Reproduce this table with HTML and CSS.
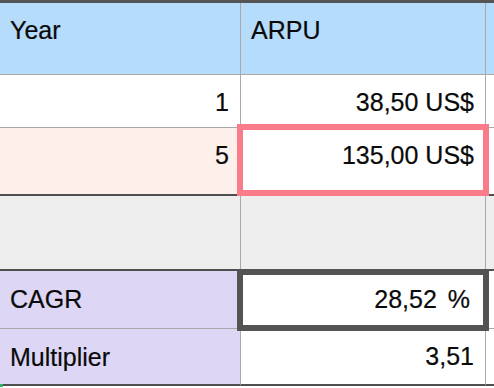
FILE: index.html
```html
<!DOCTYPE html>
<html>
<head>
<meta charset="utf-8">
<link rel="stylesheet" href="styles.css">
</head>
<body>
<div class="sheet">
  <div class="cell head c1">Year</div>
  <div class="cell head c2">ARPU</div>
  <div class="cell head c3"></div>

  <div class="cell r1 c1 num">1</div>
  <div class="cell r1 c2 num">38,50 US$</div>
  <div class="cell r1 c3"></div>

  <div class="cell r2 c1 num peach">5</div>
  <div class="cell r2 c2 num sel-pink">135,00 US$</div>
  <div class="cell r2 c3"></div>

  <div class="cell r3 c1 grey"></div>
  <div class="cell r3 c2 grey"></div>
  <div class="cell r3 c3 grey"></div>

  <div class="cell r4 c1 purple">CAGR</div>
  <div class="cell r4 c2 num sel-dark">28,52 %</div>
  <div class="cell r4 c3"></div>

  <div class="cell r5 c1 purple">Multiplier</div>
  <div class="cell r5 c2 num">3,51</div>
  <div class="cell r5 c3"></div>
</div>
<div class="handle"></div>
</body>
</html>
```

FILE: styles.css
```css
html, body {
  margin: 0;
  padding: 0;
  background: #ffffff;
}

body {
  width: 494px;
  height: 388px;
  overflow: hidden;
  position: relative;
  font-family: "Liberation Sans", Arial, sans-serif;
  color: #0a0a0a;
}

.sheet {
  display: grid;
  grid-template-columns: 241px 245px 1fr;
  grid-template-rows: 72px 53px 68px 75px 58px 57px;
  border-top: 3px solid #555555;
}

.cell {
  box-sizing: border-box;
  font-size: 25px;
  line-height: 28px;
  padding: 13px 11px 0 10px;
  border-bottom: 1px solid #a9a9a9;
  border-right: 1px solid #a9a9a9;
  background: #ffffff;
  white-space: nowrap;
  position: relative;
  -webkit-text-stroke: 0.2px #0a0a0a;
}

.c3 {
  border-right: none;
}

.num {
  text-align: right;
}

.head {
  background: #b6dcfb;
}

.r2,
.r3,
.r5 {
  border-bottom: 2px solid #4f4f4f;
}

.r4.c1,
.r5.c1 {
  padding-top: 14px;
}

.peach {
  background: #fdf0ea;
}

.grey {
  background: #eeeeee;
}

.purple {
  background: #ddd7f5;
}

.sel-pink,
.sel-dark {
  z-index: 2;
}

.sel-pink::after {
  content: "";
  position: absolute;
  left: -4px;
  right: -4px;
  top: -4px;
  bottom: -2px;
  border: 6px solid #fa7b8a;
  pointer-events: none;
}

.sel-dark {
  padding-top: 14px;
  padding-right: 15px;
  word-spacing: 4px;
}

.sel-dark::after {
  content: "";
  position: absolute;
  left: -4px;
  right: -4px;
  top: -2px;
  bottom: -3px;
  border: 6px solid #535353;
  pointer-events: none;
}

.handle {
  position: absolute;
  left: 0;
  top: 384px;
  width: 3px;
  height: 3px;
  background: #2fb36b;
}
```
